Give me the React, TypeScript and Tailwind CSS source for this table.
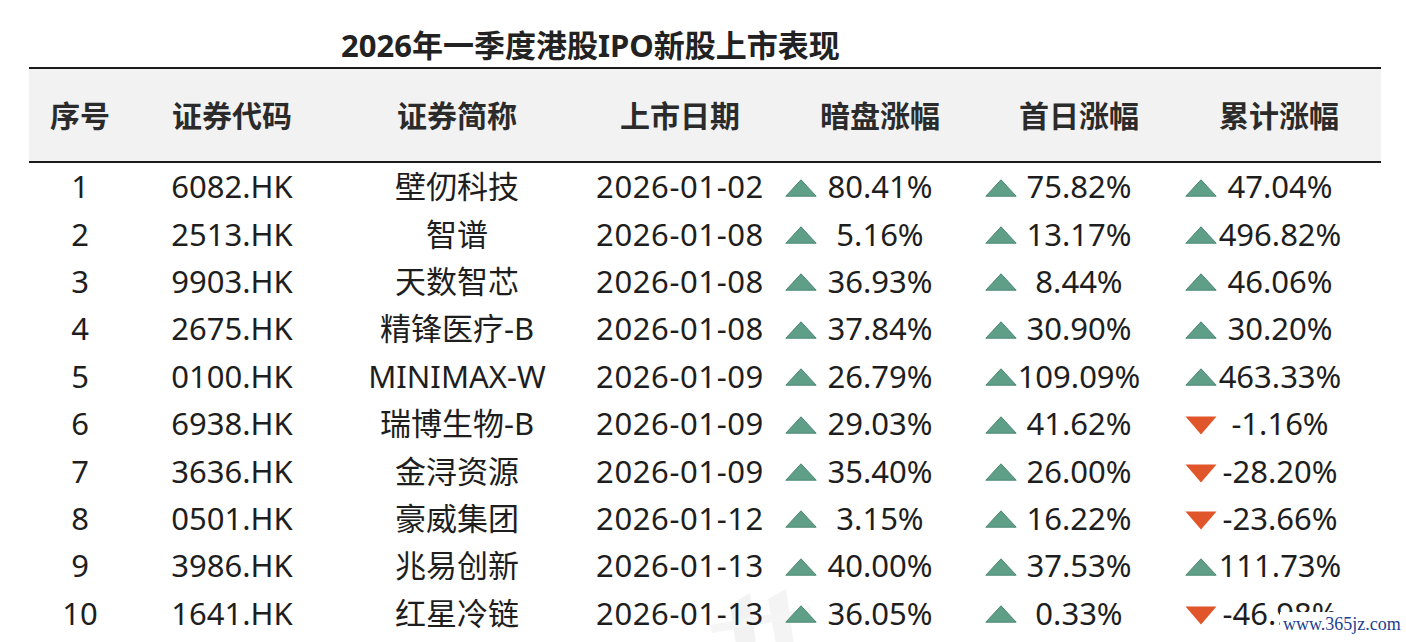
import React from "react";

type Row = {
  no: string;
  code: string;
  name: string;
  date: string;
  a: string;
  b: string;
  c: string;
};

const rows: Row[] = [
  { no: "1", code: "6082.HK", name: "壁仞科技", date: "2026-01-02", a: "80.41%", b: "75.82%", c: "47.04%" },
  { no: "2", code: "2513.HK", name: "智谱", date: "2026-01-08", a: "5.16%", b: "13.17%", c: "496.82%" },
  { no: "3", code: "9903.HK", name: "天数智芯", date: "2026-01-08", a: "36.93%", b: "8.44%", c: "46.06%" },
  { no: "4", code: "2675.HK", name: "精锋医疗-B", date: "2026-01-08", a: "37.84%", b: "30.90%", c: "30.20%" },
  { no: "5", code: "0100.HK", name: "MINIMAX-W", date: "2026-01-09", a: "26.79%", b: "109.09%", c: "463.33%" },
  { no: "6", code: "6938.HK", name: "瑞博生物-B", date: "2026-01-09", a: "29.03%", b: "41.62%", c: "-1.16%" },
  { no: "7", code: "3636.HK", name: "金浔资源", date: "2026-01-09", a: "35.40%", b: "26.00%", c: "-28.20%" },
  { no: "8", code: "0501.HK", name: "豪威集团", date: "2026-01-12", a: "3.15%", b: "16.22%", c: "-23.66%" },
  { no: "9", code: "3986.HK", name: "兆易创新", date: "2026-01-13", a: "40.00%", b: "37.53%", c: "111.73%" },
  { no: "10", code: "1641.HK", name: "红星冷链", date: "2026-01-13", a: "36.05%", b: "0.33%", c: "-46.98%" },
];

const grid = "grid grid-cols-[102px_202px_248px_198px_202px_196px_204px]";

function Tri({ down }: { down: boolean }) {
  if (down) {
    return (
      <svg width="32" height="19" viewBox="0 0 32 19" className="shrink-0 translate-y-[2px]">
        <polygon points="0.5,0.5 31.5,0.5 16,18.5" fill="#e0552a" />
      </svg>
    );
  }
  return (
    <svg width="32" height="18" viewBox="0 0 32 18" className="shrink-0 translate-y-[1px]">
      <polygon points="16,0.8 31.2,17.2 0.8,17.2" fill="#5f9f88" stroke="#4b8873" strokeWidth="1" />
    </svg>
  );
}

function Change({ v, pl, pr }: { v: string; pl: string; pr: string }) {
  const down = v.startsWith("-");
  return (
    <div className={`flex items-center ${pl} ${pr}`}>
      <Tri down={down} />
      <div className="flex-1 text-center whitespace-nowrap">{v}</div>
    </div>
  );
}

export default function App() {
  const font = { fontFamily: '"Noto Sans", "Noto Sans CJK SC", sans-serif' };
  return (
    <div className="relative isolate w-[1406px] h-[642px] overflow-hidden bg-white text-[#1e1e1e]" style={font}>
      <svg className="absolute -z-10 left-[690px] top-[585px]" width="140" height="60" viewBox="0 0 140 60">
        <polygon points="40,20 60,8 66,60 46,60" fill="#f2f2f2" />
        <polygon points="78,14 96,4 104,60 86,60" fill="#f4f4f4" />
        <polygon points="20,40 120,22 122,30 22,48" fill="#f5f5f5" />
      </svg>

      <div className="h-[67px] pt-[23px] pl-[341px] text-[31px] leading-[44px] font-bold text-[#222] whitespace-nowrap">
        2026年一季度港股IPO新股上市表现
      </div>

      <div className="ml-[29px] w-[1352px]">
        <div className={`${grid} h-[96px] items-center border-t-2 border-b-2 border-[#1b1b1b] bg-[#f2f2f2] text-[30px] font-bold text-[#2b2b2b]`}>
          <div className="text-center">序号</div>
          <div className="text-center">证券代码</div>
          <div className="text-center">证券简称</div>
          <div className="text-center">上市日期</div>
          <div className="text-center">暗盘涨幅</div>
          <div className="text-center">首日涨幅</div>
          <div className="text-center">累计涨幅</div>
        </div>

        {rows.map((r) => (
          <div key={r.no} className={`${grid} h-[47.4px] items-center text-[31px] leading-none`}>
            <div className="text-center">{r.no}</div>
            <div className="text-center">{r.code}</div>
            <div className="text-center whitespace-nowrap">{r.name}</div>
            <div className="text-center tracking-[0.6px]">{r.date}</div>
            <Change v={r.a} pl="pl-[6px]" pr="pr-[38px]" />
            <Change v={r.b} pl="pl-[4px]" pr="pr-[36px]" />
            <Change v={r.c} pl="pl-[8px]" pr="pr-[38px]" />
          </div>
        ))}
      </div>

      <div
        className="absolute left-[1280px] top-[612px] bg-white px-[3px] text-[18px] leading-[24px] text-[#1d3f91]"
        style={{ fontFamily: '"Liberation Serif", serif' }}
      >
        www.365jz.com
      </div>
    </div>
  );
}
